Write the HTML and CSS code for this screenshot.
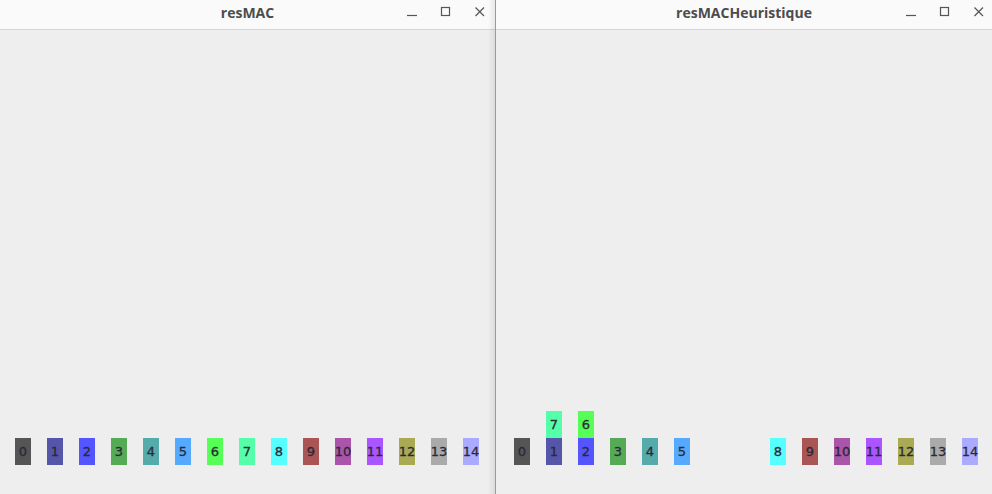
FILE: index.html
```html
<!DOCTYPE html>
<html>
<head>
<meta charset="utf-8">
<link rel="stylesheet" href="styles.css">
</head>
<body>
<div class="desk">
  <div class="win win-left">
    <div class="titlebar">
      <div class="title">resMAC</div>
      <div class="controls">
        <svg class="ic" width="12" height="12" viewBox="0 0 12 12"><path d="M1 9.5H11" stroke="#555" stroke-width="1.2" fill="none"/></svg>
        <svg class="ic" width="12" height="12" viewBox="0 0 12 12"><rect x="1.5" y="1.5" width="8" height="8" stroke="#555" stroke-width="1.2" fill="none"/></svg>
        <svg class="ic" width="12" height="12" viewBox="0 0 12 12"><path d="M1.5 1.5L10 10M10 1.5L1.5 10" stroke="#555" stroke-width="1.2" fill="none"/></svg>
      </div>
    </div>
    <div class="content">
      <div class="stacks pad-left">
        <div class="col"><div class="blk c0">0</div></div>
        <div class="col"><div class="blk c1">1</div></div>
        <div class="col"><div class="blk c2">2</div></div>
        <div class="col"><div class="blk c3">3</div></div>
        <div class="col"><div class="blk c4">4</div></div>
        <div class="col"><div class="blk c5">5</div></div>
        <div class="col"><div class="blk c6">6</div></div>
        <div class="col"><div class="blk c7">7</div></div>
        <div class="col"><div class="blk c8">8</div></div>
        <div class="col"><div class="blk c9">9</div></div>
        <div class="col"><div class="blk c10">10</div></div>
        <div class="col"><div class="blk c11">11</div></div>
        <div class="col"><div class="blk c12">12</div></div>
        <div class="col"><div class="blk c13">13</div></div>
        <div class="col"><div class="blk c14">14</div></div>
      </div>
      <div class="shadow"></div>
    </div>
  </div>
  <div class="divider"></div>
  <div class="win win-right">
    <div class="titlebar">
      <div class="title">resMACHeuristique</div>
      <div class="controls">
        <svg class="ic" width="12" height="12" viewBox="0 0 12 12"><path d="M1 9.5H11" stroke="#555" stroke-width="1.2" fill="none"/></svg>
        <svg class="ic" width="12" height="12" viewBox="0 0 12 12"><rect x="1.5" y="1.5" width="8" height="8" stroke="#555" stroke-width="1.2" fill="none"/></svg>
        <svg class="ic" width="12" height="12" viewBox="0 0 12 12"><path d="M1.5 1.5L10 10M10 1.5L1.5 10" stroke="#555" stroke-width="1.2" fill="none"/></svg>
      </div>
    </div>
    <div class="content">
      <div class="stacks pad-right">
        <div class="col"><div class="blk c0">0</div></div>
        <div class="col"><div class="blk c7">7</div><div class="blk c1">1</div></div>
        <div class="col"><div class="blk c6">6</div><div class="blk c2">2</div></div>
        <div class="col"><div class="blk c3">3</div></div>
        <div class="col"><div class="blk c4">4</div></div>
        <div class="col"><div class="blk c5">5</div></div>
        <div class="col"></div>
        <div class="col"></div>
        <div class="col"><div class="blk c8">8</div></div>
        <div class="col"><div class="blk c9">9</div></div>
        <div class="col"><div class="blk c10">10</div></div>
        <div class="col"><div class="blk c11">11</div></div>
        <div class="col"><div class="blk c12">12</div></div>
        <div class="col"><div class="blk c13">13</div></div>
        <div class="col"><div class="blk c14">14</div></div>
      </div>
    </div>
  </div>
</div>
</body>
</html>
```
FILE: styles.css
```css
html, body {
  margin: 0;
  padding: 0;
  background: #eeeeee;
}
.desk {
  display: flex;
  width: 992px;
  height: 494px;
  overflow: hidden;
}
.win {
  display: flex;
  flex-direction: column;
  height: 494px;
  background: #eeeeee;
}
.win-left { width: 495px; }
.win-right { width: 496px; flex: none; }
.divider {
  width: 1px;
  background: #9a9a9a;
  flex: none;
}
.titlebar {
  position: relative;
  height: 30px;
  box-sizing: border-box;
  padding-bottom: 5px;
  background: #fafafa;
  border-bottom: 1px solid #d6d6d6;
  display: flex;
  align-items: center;
  justify-content: center;
  flex: none;
}
.title {
  font-family: "Open Sans", "DejaVu Sans", sans-serif;
  font-weight: 700;
  font-size: 14px;
  color: #4c4c4c;
}
.controls {
  position: absolute;
  top: 6px;
  right: 9px;
  display: flex;
  gap: 22px;
}
.win-right .controls { right: 7px; }
.ic { display: block; }
.content {
  position: relative;
  flex: 1;
  display: flex;
  align-items: flex-end;
}
.stacks {
  display: flex;
  align-items: flex-end;
  gap: 16px;
  padding-bottom: 29px;
}
.pad-left { padding-left: 15px; }
.pad-right { padding-left: 18px; }
.col {
  width: 16px;
  display: flex;
  flex-direction: column;
}
.blk {
  width: 16px;
  height: 27px;
  display: flex;
  align-items: center;
  justify-content: center;
  font-family: "DejaVu Sans", sans-serif;
  font-size: 13px;
  color: #2a2a36;
  -webkit-text-stroke: 0.3px #2a2a36;
  white-space: nowrap;
}
.shadow {
  position: absolute;
  top: -31px;
  right: 0;
  bottom: 0;
  width: 7px;
  background: linear-gradient(to right, rgba(0,0,0,0), rgba(0,0,0,0.08));
}
.c0 { background: #555555; }
.c1 { background: #5555aa; }
.c2 { background: #5555ff; }
.c3 { background: #55aa55; }
.c4 { background: #55aaaa; }
.c5 { background: #55aaff; }
.c6 { background: #55ff55; }
.c7 { background: #55ffaa; }
.c8 { background: #55ffff; }
.c9 { background: #aa5555; }
.c10 { background: #aa55aa; }
.c11 { background: #aa55ff; }
.c12 { background: #aaaa55; }
.c13 { background: #aaaaaa; }
.c14 { background: #aaaaff; }
```
